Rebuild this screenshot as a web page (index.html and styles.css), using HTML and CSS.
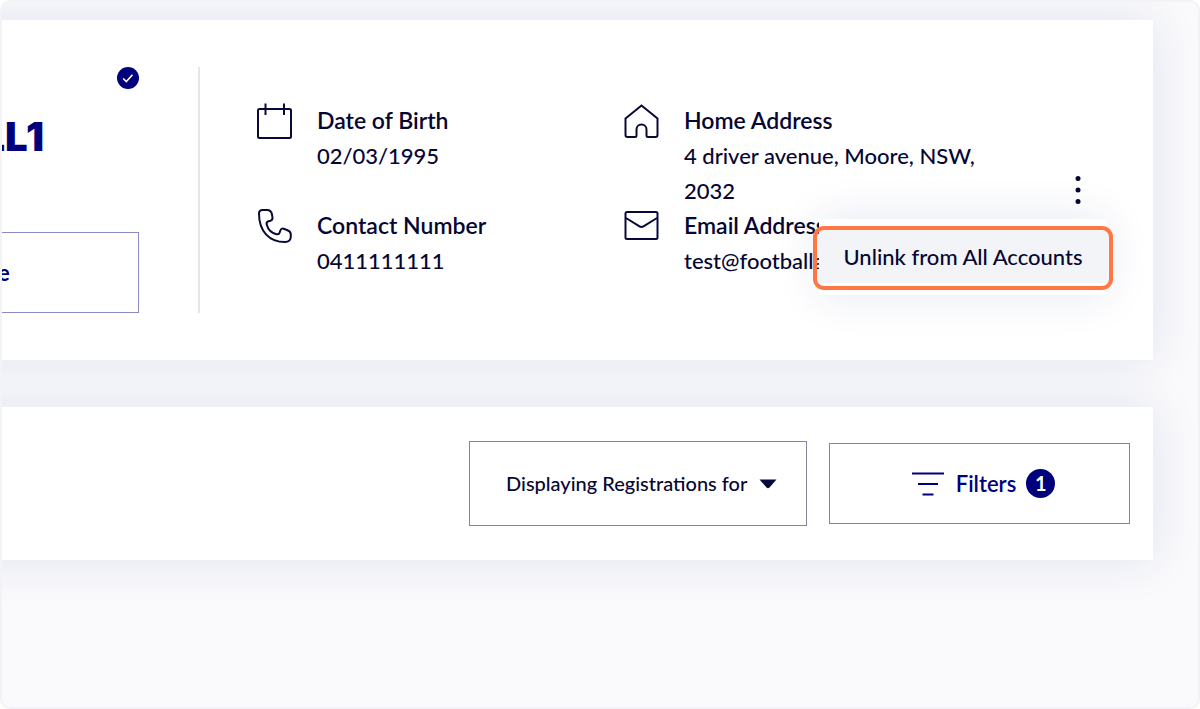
FILE: index.html
```html
<!DOCTYPE html>
<html lang="en">
<head>
<meta charset="utf-8">
<meta name="viewport" content="width=device-width, initial-scale=1">
<title>Account details</title>
<link rel="stylesheet" href="styles.css">
</head>
<body>
<main class="frame">
  <section class="card profile">
    <div class="identity">
      <svg class="badge" viewBox="0 0 22 22" role="img" aria-label="Verified"><circle cx="11" cy="11" r="11" fill="#00007d"/><path d="M6.200 11.500L9.300 14.600L15.500 7.800" fill="none" stroke="#fff" stroke-width="1.600"/></svg>
      <h1 class="name">LL1</h1>
      <button class="profile-button" type="button">e</button>
    </div>
    <div class="details">
      <div class="detail">
        <svg class="icon" viewBox="0 0 36 36" aria-hidden="true"><rect x="1" y="6" width="33" height="29" rx="1.500"/><path d="M8.500 0.500V12M27 0.500V12"/></svg>
        <dl class="entry"><dt>Date of Birth</dt><dd>02/03/1995</dd></dl>
      </div>
      <div class="detail">
        <svg class="icon" viewBox="0 0 36 36" aria-hidden="true"><path d="M1.500 15.500L17.500 2.500L33.500 15.500V32Q33.500 34 31.500 34H24Q22.500 34 22.500 32.500V26.500A5 5 0 0 0 12.500 26.500V32.500Q12.500 34 11 34H3.500Q1.500 34 1.500 32Z"/></svg>
        <dl class="entry"><dt>Home Address</dt><dd>4 driver avenue, Moore, NSW, 2032</dd></dl>
      </div>
      <div class="detail">
        <svg class="icon" viewBox="0 0 36 36" aria-hidden="true"><path d="M2 5.500Q2 2 5.500 2H10Q14.200 2 15 6.500L15.500 9.500Q15.700 12 13.500 12.700L11.500 13.200Q9 14 9.700 16.500C11 21.500 14.500 25 19.500 26.200Q22 26.700 22.700 24.500L23.300 22.500Q24.300 20 26.700 20.700L30.500 22.200Q33.800 23.500 33.800 26.500V28.500Q33.800 34 28 34C12 34 2 23 2 5.500Z"/></svg>
        <dl class="entry"><dt>Contact Number</dt><dd>0411111111</dd></dl>
      </div>
      <div class="detail">
        <svg class="icon" viewBox="0 0 36 36" aria-hidden="true"><rect x="1.500" y="4" width="32" height="27" rx="1.500"/><path d="M2 10L15.500 18.300Q17.500 19.500 19.500 18.300L33 10"/></svg>
        <dl class="entry"><dt>Email Address</dt><dd>test@footballa</dd></dl>
      </div>
    </div>
    <div class="actions">
      <button class="more" type="button" aria-label="More options" aria-expanded="true">
        <svg viewBox="0 0 6 30" width="6" height="30" aria-hidden="true"><circle cx="3" cy="3.500" r="2.500"/><circle cx="3" cy="15" r="2.500"/><circle cx="3" cy="26.500" r="2.500"/></svg>
      </button>
      <div class="menu">
        <button class="menu-item" type="button">Unlink from All Accounts</button>
        <span class="highlight"></span>
      </div>
    </div>
  </section>
  <section class="card toolbar">
    <div class="select-box">
      <select class="select" aria-label="Registrations shown"><option>Displaying Registrations for</option></select>
      <svg class="caret" viewBox="0 0 18 10" aria-hidden="true"><path d="M0.500 0.500H17.500L10.500 8.500Q9 10 7.500 8.500Z" fill="#08083a"/></svg>
    </div>
    <button class="filters" type="button">
      <svg class="filter-icon" viewBox="0 0 32 24" aria-hidden="true"><path d="M0 1.500H32M6 12H26M10.500 22.500H21.500"/></svg>
      <span>Filters</span>
      <span class="count">1</span>
    </button>
  </section>
</main>
</body>
</html>
```
FILE: styles.css
```css
* { box-sizing: border-box; }

body {
  margin: 0;
  background: #fff;
  color: #060633;
  font-family: Lato, "Open Sans", sans-serif;
  font-size: 22px;
  line-height: 35px;
}

button, select {
  margin: 0;
  font: inherit;
  color: inherit;
  background: none;
  border: 0;
  cursor: pointer;
}

.frame {
  display: flex;
  flex-direction: column;
  gap: 47px;
  min-height: 100vh;
  padding: 18px 45px 18px 0;
  overflow: hidden;
  background: #fafafc;
  border: 2px solid #f3f3f7;
  border-radius: 10px;
}

/* Cards run on past the left side of the frame. */
.card {
  display: flex;
  margin-left: -60px;
  background: #fff;
  box-shadow: 0 0 45px rgba(20, 45, 140, 0.11);
}

.profile {
  position: relative;
  padding: 47px 53px 47px 0;
}

.identity {
  display: flex;
  flex-direction: column;
  width: 258px;
  padding-right: 59px;
  border-right: 2px solid #e6e6e6;
}

.badge {
  align-self: flex-end;
  width: 22px;
  height: 22px;
}

.name {
  margin: 24px 0 71px;
  padding-right: 95px;
  color: #00007d;
  font-family: Inter, sans-serif;
  font-size: 40px;
  font-weight: 900;
  line-height: 48px;
  text-align: right;
}

.profile-button {
  height: 81px;
  padding: 0 0 0 55px;
  border: 1px solid #8a8ac4;
  color: #00007d;
  font-weight: 700;
  text-align: left;
}

.details {
  display: grid;
  flex: 1;
  grid-template-columns: 1fr 1fr;
  align-content: center;
  padding-left: 57px;
}

.detail {
  display: flex;
  gap: 24px;
  min-width: 0;
}

.icon {
  flex: none;
  width: 36px;
  height: 36px;
  fill: none;
  stroke: #08083a;
  stroke-width: 2;
}

.entry { margin: 0; }
.entry dt { font-size: 23px; font-weight: 600; }
.entry dd { margin: 0; font-weight: 500; }

.actions {
  position: relative;
  display: flex;
  align-items: center;
  align-self: center;
  margin-left: 65px;
}

.more {
  display: grid;
  place-items: center;
  width: 44px;
  height: 44px;
  padding: 0;
  fill: #060633;
}

.menu {
  position: absolute;
  top: 51px;
  right: -7px;
  width: 288px;
  padding: 11px 0 12px;
  background: #fff;
  box-shadow: 0 0 45px rgba(20, 45, 140, 0.11);
}

.menu-item {
  display: block;
  width: 100%;
  height: 53px;
  padding: 0;
  background: #f3f4f7;
  font-weight: 500;
  white-space: nowrap;
}

.highlight {
  position: absolute;
  inset: 7px -6px 5px;
  border: 4px solid #ff7742;
  border-radius: 11px;
  pointer-events: none;
}

.toolbar {
  flex-wrap: wrap;
  align-items: center;
  justify-content: flex-end;
  gap: 22px;
  padding: 34px 23px;
}

.select-box {
  position: relative;
  width: 338px;
}

.select {
  width: 100%;
  height: 85px;
  padding: 0 56px 0 36px;
  appearance: none;
  border: 1px solid #83839a;
  border-radius: 0;
  font-size: 20px;
  font-weight: 500;
}

.caret {
  position: absolute;
  top: 38px;
  right: 30px;
  width: 18px;
  height: 10px;
  pointer-events: none;
}

.filters {
  display: flex;
  align-items: center;
  justify-content: center;
  gap: 10px;
  width: 301px;
  height: 81px;
  padding: 0 0 0 8px;
  border: 1px solid #83839a;
  color: #00007d;
  font-weight: 600;
}

.filter-icon {
  width: 32px;
  height: 24px;
  margin-right: 2px;
  fill: none;
  stroke: #00007d;
  stroke-width: 2;
}

.count {
  display: grid;
  place-items: center;
  width: 29px;
  height: 29px;
  border-radius: 50%;
  background: #00007d;
  color: #fff;
  font-size: 20px;
  font-weight: 700;
  line-height: 29px;
}
```
